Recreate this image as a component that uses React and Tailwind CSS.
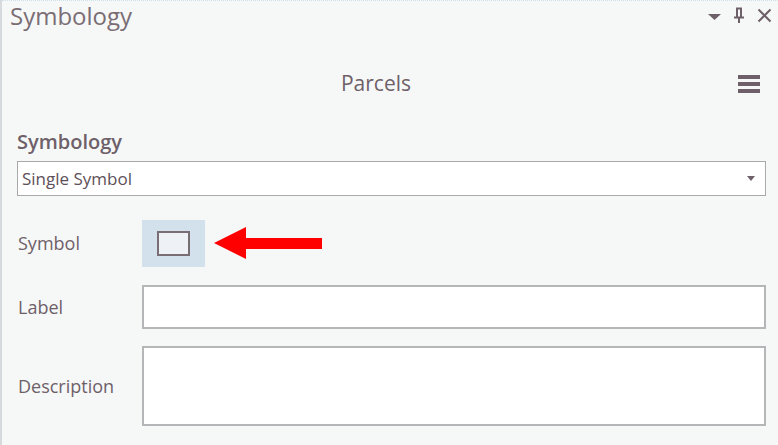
export default function App() {
  const font = { fontFamily: '"Segoe UI", "Open Sans", "Noto Sans", sans-serif' };
  return (
    <div
      className="w-[778px] h-[445px] bg-[#f6f8f8] border-l-2 border-[#d6dadc] text-[#6e6068] relative overflow-hidden"
      style={font}
    >
      <div className="border-t border-dotted border-[#cfe0ee]" />
      {/* header */}
      <div className="flex items-center justify-between h-[34px] pl-[8px] pr-[6px]">
        <span className="text-[24px] leading-none text-[#7a6d74] -mt-[4px]">Symbology</span>
        <div className="flex items-center gap-[12px] -mt-[6px]">
          <svg width="13" height="6" viewBox="0 0 13 6" className="mt-[4px]">
            <path d="M0 0 H13 L6.5 6 Z" fill="#6e6068" />
          </svg>
          <svg width="12" height="16" viewBox="0 0 12 16">
            <path d="M3 1.5 H9 M4 1.5 V10 M8 1.5 V10 M1 10.5 H11 M6 10.5 V16" stroke="#6e6068" strokeWidth="2" fill="none" />
          </svg>
          <svg width="15" height="15" viewBox="0 0 15 15">
            <path d="M1.5 1.5 L13.5 13.5 M13.5 1.5 L1.5 13.5" stroke="#6e6068" strokeWidth="2" fill="none" />
          </svg>
        </div>
      </div>

      {/* layer title */}
      <div className="relative flex justify-center items-center h-[34px] mt-[32px] pr-[28px]">
        <span className="text-[21px] text-[#6e6068]">Parcels</span>
        <div className="absolute right-[18px] top-[8px] flex flex-col gap-[3px]">
          <div className="w-[22px] h-[4px] bg-[#6e6068]" />
          <div className="w-[22px] h-[4px] bg-[#6e6068]" />
          <div className="w-[22px] h-[4px] bg-[#6e6068]" />
        </div>
      </div>

      <div className="pl-[15px] pr-[12px] mt-[28px]">
        <div className="text-[20px] font-semibold leading-[26px] text-[#6e6068]">Symbology</div>
        <div className="mt-[6px] h-[35px] bg-white border border-[#a9a9a9] flex items-center justify-between pl-[4px] pr-[10px]">
          <span className="text-[17px] text-[#5e5058]">Single Symbol</span>
          <svg width="8" height="5" viewBox="0 0 8 5">
            <path d="M0 0 H8 L4 5 Z" fill="#6e6068" />
          </svg>
        </div>

        <div className="flex items-center mt-[24px] h-[47px]">
          <div className="w-[125px] text-[18px] pl-[1px]">Symbol</div>
          <div className="w-[63px] h-[47px] bg-[#d3e1ec] flex items-center justify-center">
            <div className="w-[33px] h-[25px] border-2 border-[#7a6e75] bg-[#eef2f6]" />
          </div>
          <svg width="110" height="34" viewBox="0 0 110 34" className="ml-[9px]">
            <path d="M0 16 L32 0 V11 H108 V22 H32 V32 Z" fill="#ff0000" />
          </svg>
        </div>

        <div className="flex items-center mt-[18px]">
          <div className="w-[125px] text-[18px] pl-[1px]">Label</div>
          <div className="flex-1 h-[44px] bg-white border-2 border-[#b4b6b8]" />
        </div>

        <div className="flex items-center mt-[17px]">
          <div className="w-[125px] text-[18px] pl-[1px]">Description</div>
          <div className="flex-1 h-[80px] bg-white border-2 border-[#b4b6b8]" />
        </div>
      </div>
    </div>
  );
}
